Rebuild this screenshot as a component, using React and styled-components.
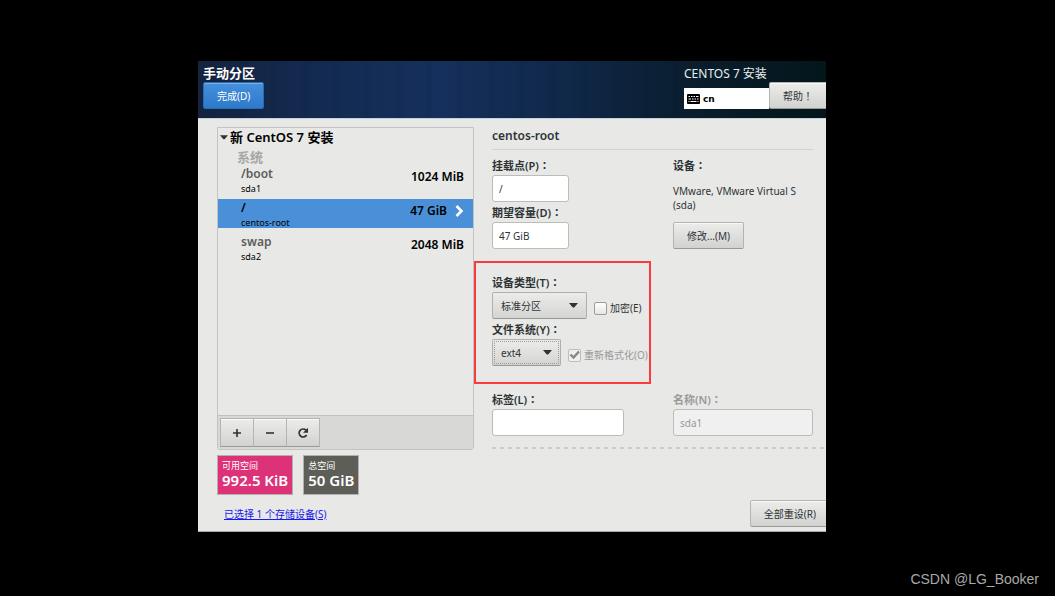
import React, { useState } from 'react';
import styled, { createGlobalStyle } from 'styled-components';

const GlobalStyle = createGlobalStyle`
  * {
    box-sizing: border-box;
  }

  body {
    margin: 0;
    background: #000;
    color: #2e3436;
    font-family: 'Noto Sans', 'Noto Sans CJK SC', sans-serif;
    font-size: 10px;
    line-height: 14px;
  }

  button, input, select {
    font: inherit;
    color: inherit;
    margin: 0;
  }
`;

// Page
const Page = styled.div`
  min-height: 100vh;
  display: flex;
  flex-direction: column;
  padding: 61px 16px 8px 198px;
`;

const Screen = styled.main`
  margin-right: 213px;
  overflow: hidden;
  background: #e8e8e6;
  border-bottom: 1px solid #a5a8a5;
`;

const Watermark = styled.footer`
  margin-top: 38px;
  align-self: flex-end;
  color: #a9a9a9;
  font-family: 'Liberation Sans', sans-serif;
  font-size: 14px;
  line-height: 18px;
`;

// Full-width punctuation, centred in its cell
const Punct = styled.span`
  font-family: 'Noto Sans CJK TC', sans-serif;
  line-height: 1;
`;

// Buttons
const Button = styled.button`
  height: 27px;
  padding: 0 13px;
  border: 1px solid #b4b4b0;
  border-bottom-color: #9a9a96;
  border-radius: 2px;
  background: linear-gradient(#ececeb, #d2d2d0);
  box-shadow: inset 0 1px #f8f8f8;
  white-space: nowrap;
`;

const DoneButton = styled(Button)`
  border-color: #2a6cb4;
  background: linear-gradient(#4690dc, #2d79cb);
  box-shadow: inset 0 1px #78b0e8;
  color: #fff;
`;

const EdgeButton = styled(Button)`
  margin-right: -1px;
  border-radius: 2px 0 0 2px;
`;

// Header
const Header = styled.header`
  display: flex;
  justify-content: space-between;
  height: 58px;
  padding: 4px 0 0 5px;
  border-bottom: 1px solid #c4d2d8;
  background:
    repeating-linear-gradient(90deg, transparent 0 9px, rgba(4, 16, 44, 0.08) 13px 15px, transparent 20px 31px),
    linear-gradient(90deg, #14233f 0%, #132b52 20%, #15305c 38%, #10284a 58%, #0a1e2e 78%, #03161a 100%);
  color: #fff;
`;

const PageTitle = styled.h1`
  margin: 0;
  font-size: 13px;
  line-height: 17px;
`;

const ProductName = styled.div`
  font-size: 12px;
  line-height: 17px;
  color: #e8eef0;
`;

const HeaderTools = styled.div`
  display: flex;
  align-items: flex-end;
  color: #2e3436;
`;

const KeyboardButton = styled.button`
  display: flex;
  align-items: center;
  gap: 3px;
  width: 85px;
  height: 21px;
  padding: 0 3px;
  border: 0;
  background: #fff;
  color: #000;
  font-family: 'DejaVu Sans', sans-serif;
  font-size: 9px;
  font-weight: 700;
`;

// Body
const Body = styled.div`
  display: grid;
  grid-template-columns: 257px minmax(0, 1fr);
  gap: 18px;
  padding: 8px 0 0 19px;
`;

const Tree = styled.section`
  height: 323px;
  display: flex;
  flex-direction: column;
  border: 1px solid #c3c3c1;
  border-radius: 0 0 3px 3px;
`;

const TreeHeading = styled.h2`
  display: flex;
  align-items: center;
  gap: 2px;
  margin: 0;
  padding-left: 2px;
  color: #000;
  font-size: 13px;
  font-weight: 600;
  line-height: 18px;
`;

const GroupName = styled.h3`
  margin: 3px 0 0 19px;
  color: #a6a6a4;
  font-size: 13px;
  line-height: 16px;
`;

const MountList = styled.div`
  flex: 1;
  display: flex;
  flex-direction: column;
  gap: 5px;
`;

const MountRow = styled.button`
  display: flex;
  align-items: flex-start;
  height: 29px;
  padding: 0 9px 0 23px;
  border: 0;
  background: ${({ $selected }) => ($selected ? '#4a90d9' : 'transparent')};
  color: #000;
  text-align: left;
`;

const MountNames = styled.span`
  flex: 1;
  display: flex;
  flex-direction: column;
`;

const MountPoint = styled.span`
  color: ${({ $selected }) => ($selected ? '#000' : '#5c5c5a')};
  font-size: 12px;
  font-weight: 600;
  line-height: 18px;
`;

const MountDevice = styled.span`
  font-size: 9px;
  line-height: 11px;
`;

const MountSize = styled.span`
  font-size: 12px;
  font-weight: 600;
  line-height: 24px;
`;

const Arrow = styled.svg`
  margin: 6px 0 0 8px;
`;

const Toolbar = styled.div`
  display: flex;
  padding: 2px;
  border-top: 1px solid #c0c0be;
  background: #d8d8d6;
`;

const ToolButton = styled(Button)`
  display: flex;
  align-items: center;
  justify-content: center;
  width: 34px;
  height: 29px;
  padding: 0;
  border-radius: 0;

  & + & {
    margin-left: -1px;
  }
`;

const Spaces = styled.div`
  display: flex;
  gap: 10px;
  margin-top: 5px;
`;

const SpaceBox = styled.div`
  height: 40px;
  padding: 4px 4px 0;
  border: 1px solid #b5b0b0;
  background: ${({ $color }) => $color};
  color: #fff;
`;

const SpaceLabel = styled.div`
  font-size: 9px;
  line-height: 12px;
`;

const SpaceValue = styled.div`
  font-size: 15px;
  font-weight: 600;
  line-height: 17px;
`;

const BottomBar = styled.div`
  display: flex;
  justify-content: space-between;
  align-items: center;
  margin-right: -3px;
  padding: 5px 0 4px 26px;
`;

const StorageLink = styled.a`
  color: #1818f0;
`;

// Details form
const DetailsTitle = styled.h2`
  margin: 0 13px 6px 0;
  padding-bottom: 4px;
  border-bottom: 1px solid #d2d2d0;
  font-size: 12px;
  font-weight: 600;
  line-height: 18px;
`;

const FormRow = styled.div`
  display: grid;
  grid-template-columns: 181px minmax(0, 1fr);
  margin-bottom: 23px;
`;

const Label = styled.label`
  display: block;
  color: ${({ $disabled }) => ($disabled ? '#979a9b' : '#2e3436')};
  font-size: 11px;
  font-weight: 600;
  line-height: 19px;
`;

const TextBox = styled.input`
  display: block;
  width: ${({ $width }) => $width};
  height: 27px;
  margin-bottom: 1px;
  padding: 0 6px;
  border: 1px solid #bcbcb8;
  border-radius: 3px;
  background: #fff;

  &:disabled {
    background: #f0f0f0;
    color: #979a9b;
  }
`;

const NameCell = styled.div`
  padding-right: 13px;
`;

const DeviceText = styled.p`
  margin: 9px 0 10px;
  max-width: 130px;
`;

const Marked = styled.div`
  position: relative;
`;

const MarkFrame = styled.div`
  position: absolute;
  inset: -12px 22px -17px -18px;
  border: 2px solid #fa3c3c;
  pointer-events: none;
`;

const ControlRow = styled.div`
  display: flex;
  align-items: flex-end;
  gap: 7px;
  margin: 0 22px 1px 0;
  overflow: hidden;
`;

const SelectBox = styled.div`
  position: relative;
  flex: none;

  svg {
    position: absolute;
    top: 11px;
    right: 9px;
    pointer-events: none;
  }
`;

const Select = styled.select`
  display: block;
  appearance: none;
  width: ${({ $width }) => $width};
  height: 27px;
  padding: 0 8px;
  border: 1px solid #b0b0ac;
  border-bottom-color: #989894;
  border-radius: 2px;
  background: linear-gradient(#ececeb, #d4d4d2);
  outline: ${({ $dotted }) => ($dotted ? '1px dotted #9a9a98' : 'none')};
  outline-offset: -3px;
`;

const CheckLabel = styled.label`
  display: flex;
  align-items: center;
  gap: 3px;
  height: 22px;
  color: ${({ $disabled }) => ($disabled ? '#979a9b' : '#2e3436')};
  white-space: nowrap;
`;

const CheckBox = styled.span`
  position: relative;
  flex: none;
  width: 13px;
  height: 13px;

  input {
    display: block;
    appearance: none;
    width: 13px;
    height: 13px;
    border: 1px solid #9c9c9a;
    border-radius: 2px;
    background: linear-gradient(#fff, #e6e6e5);
  }

  input:disabled {
    border-color: #bebebc;
    background: #efefee;
  }

  svg {
    position: absolute;
    top: 1px;
    left: 1px;
    pointer-events: none;
  }
`;

const Dashes = styled.svg`
  display: block;
  width: 100%;
  height: 2px;
  margin-top: -13px;
`;

const Caret = ({ width = 9 }) => (
  <svg width={width} height="5" viewBox="0 0 9 5" fill="#2e3436">
    <path d="M0 0h9L5.2 4.6H3.8z" />
  </svg>
);

const KeyboardIcon = () => (
  <svg width="13" height="10" viewBox="0 0 13 10">
    <rect width="13" height="10" rx="1" fill="#000" />
    <path
      d="M1.5 2.5h1.5M4 2.5h1.5M6.5 2.5h1.5M9 2.5h2.5M1.5 5h2.5M5 5h1.5M7.5 5h1.5M10 5h1.5M1.5 7.5h1M3.5 7.5h6M10.5 7.5h1"
      stroke="#fff"
    />
  </svg>
);

const PlusIcon = () => (
  <svg width="10" height="10" viewBox="0 0 10 10" stroke="#2e3436" strokeWidth="1.6">
    <path d="M1 5h8M5 1v8" />
  </svg>
);

const MinusIcon = () => (
  <svg width="10" height="10" viewBox="0 0 10 10" stroke="#2e3436" strokeWidth="1.6">
    <path d="M1 5h8" />
  </svg>
);

const ReloadIcon = () => (
  <svg width="12" height="12" viewBox="0 0 12 12" fill="none">
    <path d="M9 3.2A4 4 0 1 0 9.6 8" stroke="#2e3436" strokeWidth="1.7" />
    <path d="M11 .8v5H6z" fill="#2e3436" />
  </svg>
);

const mounts = [
  { point: '/boot', device: 'sda1', size: '1024 MiB' },
  { point: '/', device: 'centos-root', size: '47 GiB' },
  { point: 'swap', device: 'sda2', size: '2048 MiB' },
];

const MountTree = () => {
  const [selected, setSelected] = useState('/');

  return (
    <Tree>
      <TreeHeading>
        <Caret width={8} />
        新 CentOS 7 安装
      </TreeHeading>
      <GroupName>系统</GroupName>
      <MountList>
        {mounts.map((mount) => {
          const isSelected = mount.point === selected;
          return (
            <MountRow key={mount.point} type="button" $selected={isSelected} onClick={() => setSelected(mount.point)}>
              <MountNames>
                <MountPoint $selected={isSelected}>{mount.point}</MountPoint>
                <MountDevice>{mount.device}</MountDevice>
              </MountNames>
              <MountSize>{mount.size}</MountSize>
              {isSelected && (
                <Arrow width="9" height="12" viewBox="0 0 9 12" fill="none" stroke="#fff" strokeWidth="2.6">
                  <path d="M1.5 1l5 5-5 5" />
                </Arrow>
              )}
            </MountRow>
          );
        })}
      </MountList>
      <Toolbar>
        <ToolButton type="button" aria-label="+"><PlusIcon /></ToolButton>
        <ToolButton type="button" aria-label="−"><MinusIcon /></ToolButton>
        <ToolButton type="button" aria-label="↻"><ReloadIcon /></ToolButton>
      </Toolbar>
    </Tree>
  );
};

const DetailsForm = () => {
  const [mountPoint, setMountPoint] = useState('/');
  const [capacity, setCapacity] = useState('47 GiB');
  const [label, setLabel] = useState('');
  const [encrypt, setEncrypt] = useState(false);

  return (
    <form>
      <DetailsTitle>centos-root</DetailsTitle>
      <FormRow>
        <div>
          <Label htmlFor="mount">挂载点(P)<Punct>：</Punct></Label>
          <TextBox id="mount" $width="77px" value={mountPoint} onChange={(e) => setMountPoint(e.target.value)} />
          <Label htmlFor="capacity">期望容量(D)<Punct>：</Punct></Label>
          <TextBox id="capacity" $width="77px" value={capacity} onChange={(e) => setCapacity(e.target.value)} />
        </div>
        <div>
          <Label as="div">设备<Punct>：</Punct></Label>
          <DeviceText>VMware, VMware Virtual S (sda)</DeviceText>
          <Button type="button">修改...(M)</Button>
        </div>
      </FormRow>
      <FormRow>
        <Marked>
          <Label htmlFor="type">设备类型(T)<Punct>：</Punct></Label>
          <ControlRow>
            <SelectBox>
              <Select id="type" $width="95px">
                <option>标准分区</option>
              </Select>
              <Caret />
            </SelectBox>
            <CheckLabel>
              <CheckBox>
                <input type="checkbox" checked={encrypt} onChange={(e) => setEncrypt(e.target.checked)} />
              </CheckBox>
              加密(E)
            </CheckLabel>
          </ControlRow>
          <Label htmlFor="fs">文件系统(Y)<Punct>：</Punct></Label>
          <ControlRow>
            <SelectBox>
              <Select id="fs" $width="69px" $dotted>
                <option>ext4</option>
              </Select>
              <Caret />
            </SelectBox>
            <CheckLabel $disabled>
              <CheckBox>
                <input type="checkbox" checked disabled readOnly />
                <svg width="11" height="10" viewBox="0 0 11 10" fill="none" stroke="#858886" strokeWidth="2.4">
                  <path d="M1.5 4.5l3 3L10 1.5" />
                </svg>
              </CheckBox>
              重新格式化(O)
            </CheckLabel>
          </ControlRow>
          <MarkFrame />
        </Marked>
      </FormRow>
      <FormRow>
        <div>
          <Label htmlFor="label">标签(L)<Punct>：</Punct></Label>
          <TextBox id="label" $width="132px" value={label} onChange={(e) => setLabel(e.target.value)} />
        </div>
        <NameCell>
          <Label htmlFor="name" $disabled>名称(N)<Punct>：</Punct></Label>
          <TextBox id="name" $width="100%" value="sda1" disabled readOnly />
        </NameCell>
      </FormRow>
      <Dashes>
        <line x1="0" y1="1" x2="100%" y2="1" stroke="#cdcdcb" strokeWidth="2" strokeDasharray="4 4" />
      </Dashes>
    </form>
  );
};

const App = () => (
  <>
    <GlobalStyle />
    <Page>
      <Screen>
        <Header>
          <div>
            <PageTitle>手动分区</PageTitle>
            <DoneButton type="button">完成(D)</DoneButton>
          </div>
          <div>
            <ProductName>CENTOS 7 安装</ProductName>
            <HeaderTools>
              <KeyboardButton type="button">
                <KeyboardIcon />
                cn
              </KeyboardButton>
              <EdgeButton type="button">帮助<Punct>！</Punct></EdgeButton>
            </HeaderTools>
          </div>
        </Header>
        <Body>
          <div>
            <MountTree />
            <Spaces>
              <SpaceBox $color="#dd3178">
                <SpaceLabel>可用空间</SpaceLabel>
                <SpaceValue>992.5 KiB</SpaceValue>
              </SpaceBox>
              <SpaceBox $color="#5d5e57">
                <SpaceLabel>总空间</SpaceLabel>
                <SpaceValue>50 GiB</SpaceValue>
              </SpaceBox>
            </Spaces>
          </div>
          <DetailsForm />
        </Body>
        <BottomBar>
          <StorageLink href="#storage">已选择 1 个存储设备(S)</StorageLink>
          <EdgeButton type="button">全部重设(R)</EdgeButton>
        </BottomBar>
      </Screen>
      <Watermark>CSDN @LG_Booker</Watermark>
    </Page>
  </>
);

export default App;
